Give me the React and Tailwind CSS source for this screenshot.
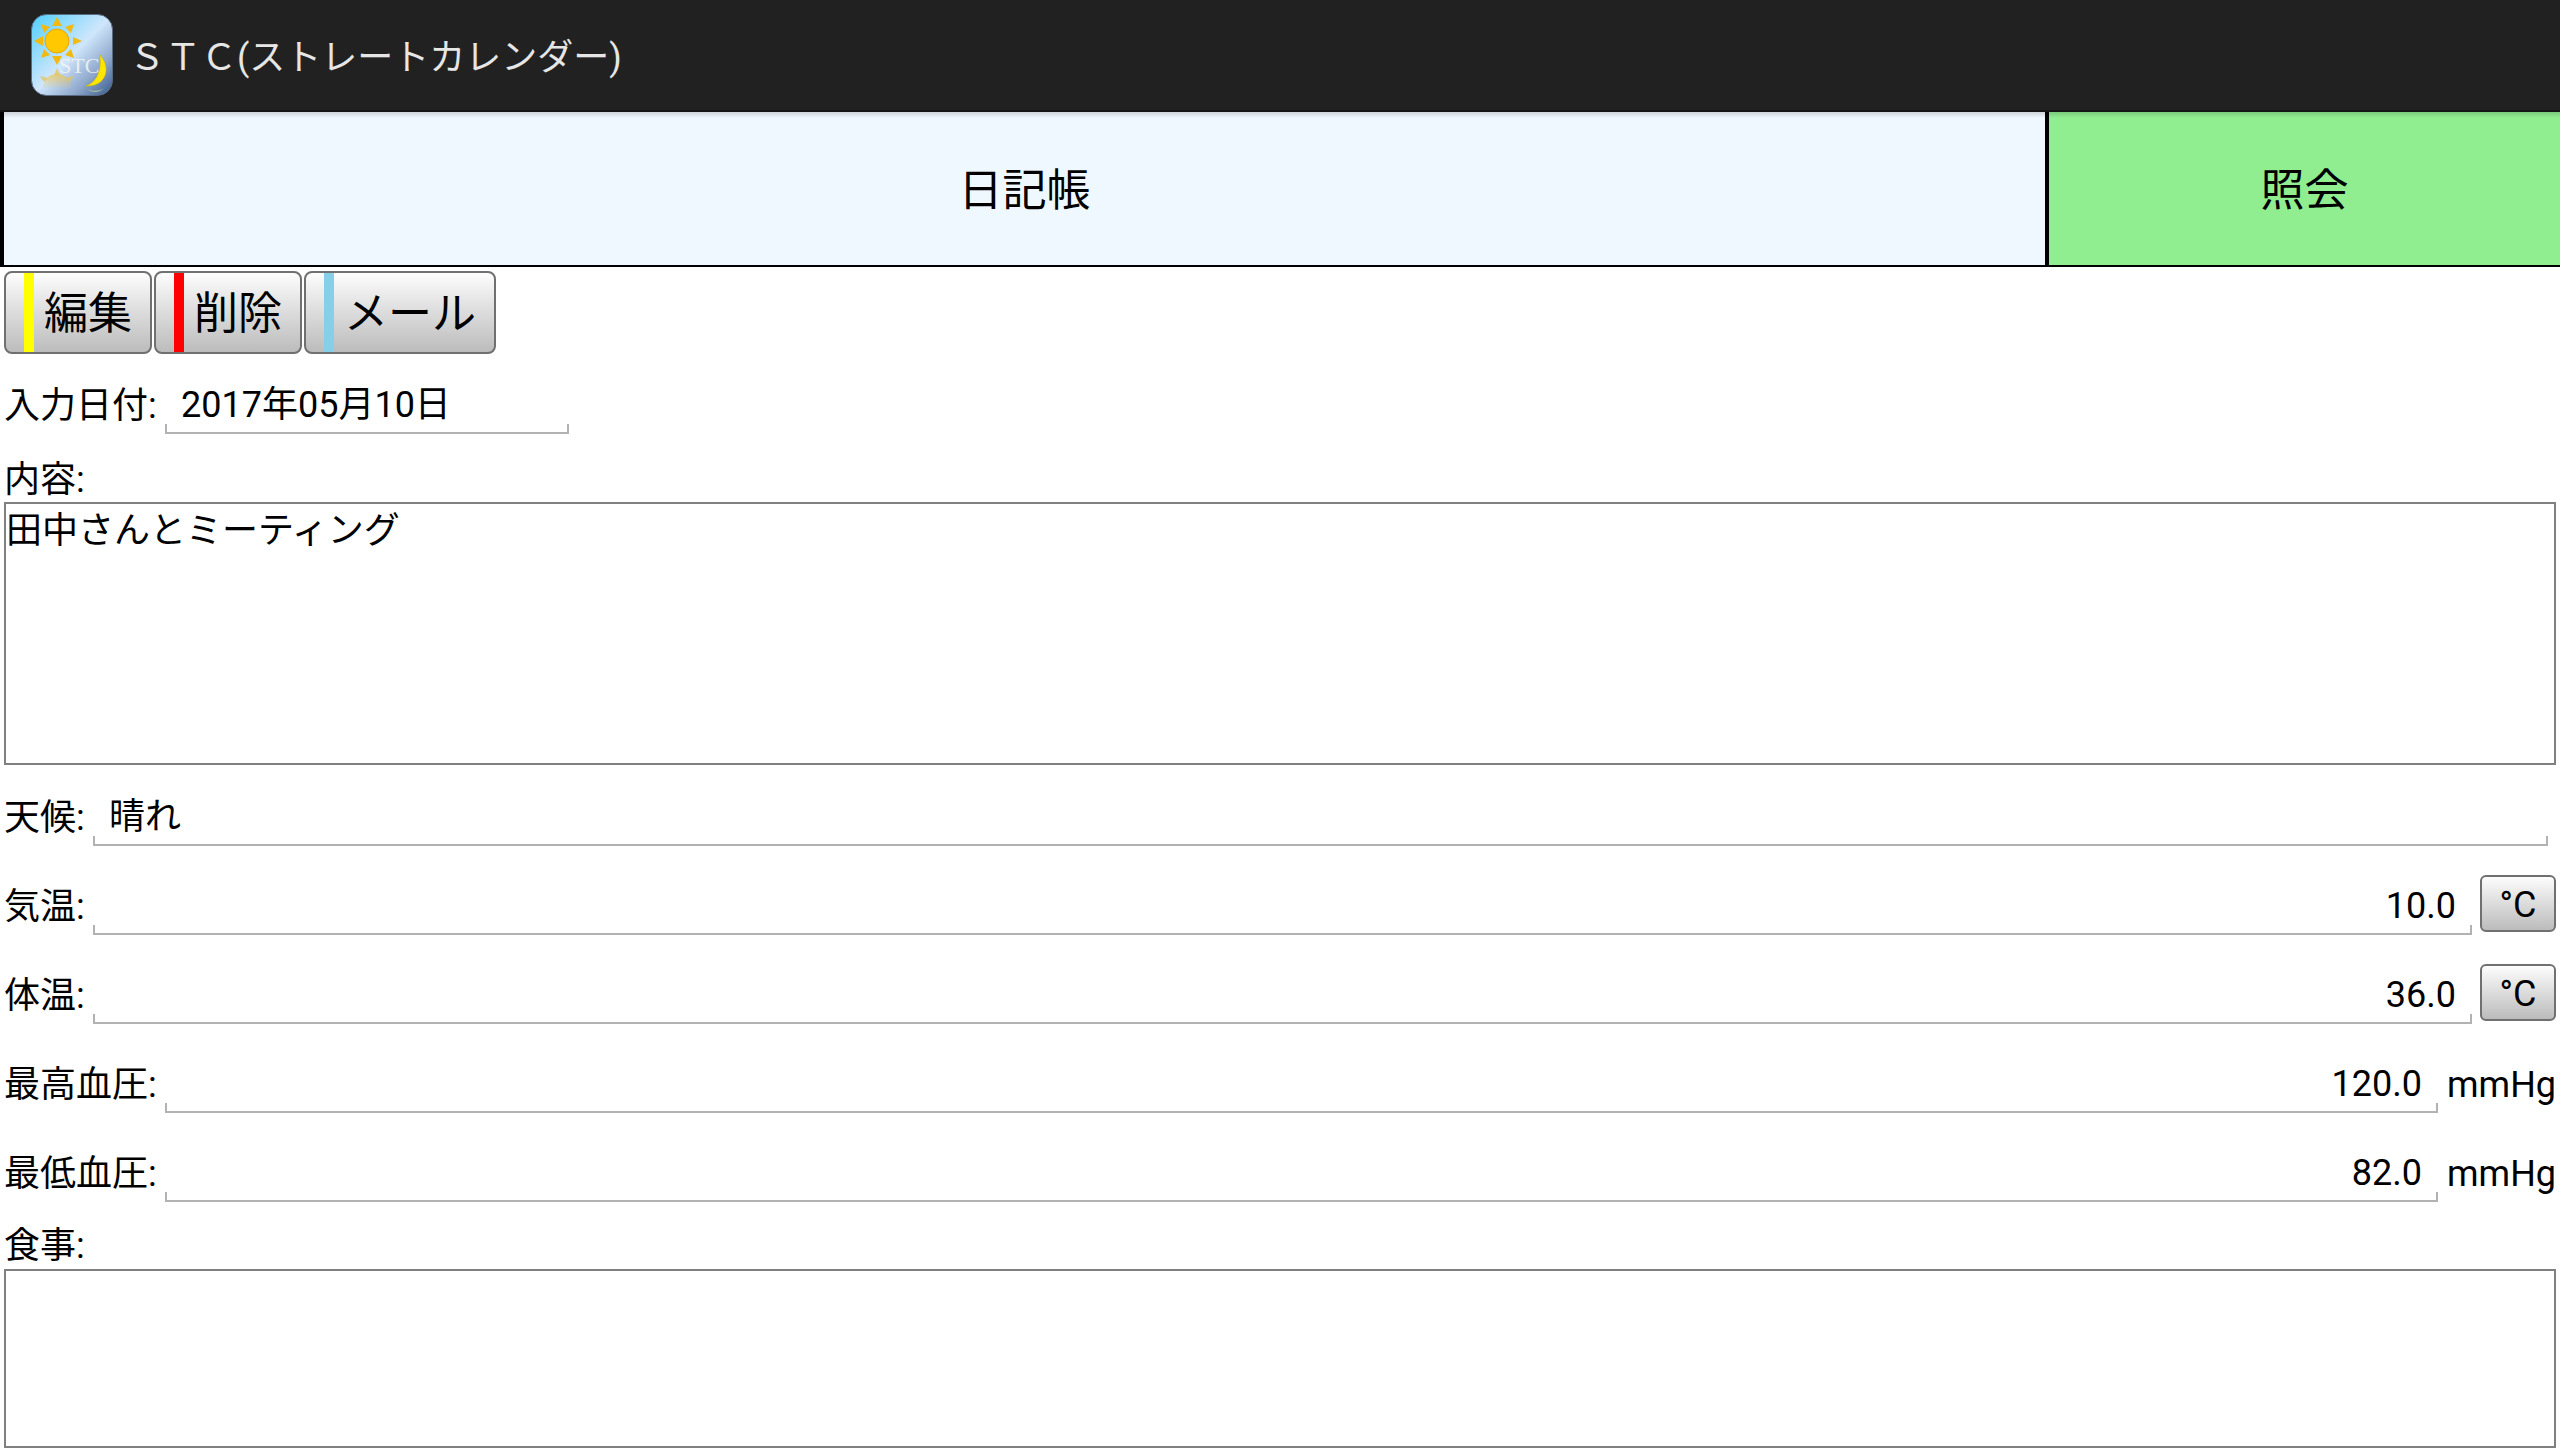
const FONT = "font-['Roboto','Noto_Sans_CJK_JP',sans-serif]";

function AppIcon() {
  return (
    <svg width="82" height="82" viewBox="0 0 82 82" className="shrink-0">
      <defs>
        <linearGradient id="sky" x1="0" y1="0" x2="1" y2="1">
          <stop offset="0" stopColor="#4fd0ff" />
          <stop offset="0.5" stopColor="#cfe6fb" />
          <stop offset="0.75" stopColor="#8fa8cc" />
          <stop offset="1" stopColor="#35588c" />
        </linearGradient>
        <linearGradient id="fade" x1="0" y1="0" x2="0" y2="1">
          <stop offset="0" stopColor="#f0c040" stopOpacity="0.7" />
          <stop offset="1" stopColor="#f0c040" stopOpacity="0.05" />
        </linearGradient>
      </defs>
      <rect x="0.5" y="0.5" width="81" height="81" rx="15" fill="url(#sky)" stroke="#5a6a80" />
      <circle cx="26" cy="27" r="12" fill="#ffc800" stroke="#e8a800" />
      <g fill="#f2b90f">
        <path d="M26 3l5 9H21z" />
        <path d="M26 51l-5-9h10z" />
        <path d="M3 27l9-5v10z" />
        <path d="M51 27l-9 4v-8z" />
        <path d="M10 10l9 3-6 6z" />
        <path d="M43 10l-3 9-6-6z" />
        <path d="M10 44l3-9 6 6z" />
        <path d="M43 44l-9-3 6-6z" />
      </g>
      <text x="28" y="59" fontSize="22" fontFamily="Liberation Serif" fill="#f4f4f4" fillOpacity="0.85">STC</text>
      <path d="M69 41c12 13 6 32-14 31 9-3 16-13 14-31z" fill="#ffe600" stroke="#c8b000" strokeWidth="0.5" />
      <path d="M12 74a14 14 0 0 1 28 0z" fill="url(#fade)" />
      <path d="M26 54l3 7h-6zM9 62l8 2-4 4zM43 62l-8 2 4 4z" fill="#e8c050" fillOpacity="0.7" />
      <path d="M56 75c6 3 13 2 17-1-3 4-11 6-17 1z" fill="#c8d890" fillOpacity="0.7" />
    </svg>
  );
}

function ActionBar() {
  return (
    <div className="flex h-[112px] items-center bg-[#212121] pl-[31px] border-b-2 border-[#151515]">
      <AppIcon />
      <span className="ml-[16px] mt-[6px] text-[36px] text-[#e6e6e6]">ＳＴＣ(ストレートカレンダー)</span>
    </div>
  );
}

function Tabs() {
  return (
    <div className="relative flex h-[155px] border-b-2 border-black text-[44px] text-black">
      <div className="absolute inset-x-0 top-0 h-[6px] bg-gradient-to-b from-black/15 to-transparent" />
      <div className="flex w-[2049px] items-center justify-center border-l-4 border-r-4 border-black bg-[#f0f8ff] pt-[5px]">日記帳</div>
      <div className="flex flex-1 items-center justify-center bg-[#90ee90] pt-[5px]">照会</div>
    </div>
  );
}

const ACTIONS = [
  { label: "編集", color: "bg-[#ffff00]", w: "w-[148px]", pl: "pl-[38px]" },
  { label: "削除", color: "bg-[#ff0000]", w: "w-[148px]", pl: "pl-[38px]" },
  { label: "メール", color: "bg-[#87ceeb]", w: "w-[192px]", pl: "pl-[38px]" },
];

function ActionButtons() {
  return (
    <div className="flex h-[87px] items-end gap-[2px] pl-[4px]">
      {ACTIONS.map((a) => (
        <div
          key={a.label}
          className={`relative flex h-[83px] items-center rounded-[8px] border-2 border-[#707070] bg-gradient-to-b from-[#fdfdfd] to-[#bcbcbc] pt-[3px] text-[44px] text-black ${a.w} ${a.pl}`}
        >
          <span className={`absolute left-[18px] top-0 bottom-0 w-[10px] ${a.color}`} />
          {a.label}
        </div>
      ))}
    </div>
  );
}

function Underline({ value, right, className = "" }) {
  return (
    <div className={`relative mb-[8px] flex h-[72px] items-center border-b-[2px] border-[#b2b2b2] px-[16px] pt-[16px] ${right ? "justify-end" : ""} ${className}`}>
      <span className="absolute bottom-0 left-0 h-[8px] w-[2px] bg-[#b2b2b2]" />
      <span className="absolute bottom-0 right-0 h-[8px] w-[2px] bg-[#b2b2b2]" />
      {value}
    </div>
  );
}

function Row({ label, labelW, children, className = "h-[89px]" }) {
  return (
    <div className={`flex items-end pl-[4px] text-[36px] text-black ${className}`}>
      <div className={`mb-[8px] flex h-[72px] shrink-0 items-center pt-[16px] ${labelW}`}>{label}</div>
      {children}
    </div>
  );
}

function UnitButton() {
  return (
    <div className="mb-[11px] ml-[8px] flex h-[57px] w-[76px] items-center justify-center rounded-[6px] border-2 border-[#707070] bg-gradient-to-b from-[#fdfdfd] to-[#bcbcbc] pt-[2px] text-[36px]">
      °C
    </div>
  );
}

function Box({ className = "", children }) {
  return <div className={`ml-[4px] w-[2552px] border-2 border-[#808080] text-[36px] leading-[54px] text-black ${className}`}>{children}</div>;
}

export default function App() {
  return (
    <div lang="ja" className={`h-[1456px] w-[2560px] overflow-hidden bg-white ${FONT}`}>
      <ActionBar />
      <Tabs />
      <ActionButtons />
      <Row label="入力日付:" labelW="w-[161px]" className="h-[88px]">
        <Underline value="2017年05月10日" className="w-[404px]" />
      </Row>
      <div className="flex h-[60px] items-center pl-[4px] pt-[15px] text-[36px] text-black">内容:</div>
      <Box className="h-[263px]">田中さんとミーティング</Box>
      <Row label="天候:" labelW="w-[89px]">
        <Underline value="晴れ" className="w-[2455px]" />
      </Row>
      <Row label="気温:" labelW="w-[89px]">
        <Underline value="10.0" right className="w-[2379px]" />
        <UnitButton />
      </Row>
      <Row label="体温:" labelW="w-[89px]">
        <Underline value="36.0" right className="w-[2379px]" />
        <UnitButton />
      </Row>
      <Row label="最高血圧:" labelW="w-[161px]">
        <Underline value="120.0" right className="w-[2273px]" />
        <span className="mb-[8px] ml-[9px] flex h-[72px] items-center pt-[16px]">mmHg</span>
      </Row>
      <Row label="最低血圧:" labelW="w-[161px]">
        <Underline value="82.0" right className="w-[2273px]" />
        <span className="mb-[8px] ml-[9px] flex h-[72px] items-center pt-[16px]">mmHg</span>
      </Row>
      <div className="flex h-[59px] items-center pl-[4px] pt-[12px] text-[36px] text-black">食事:</div>
      <Box className="h-[179px]" />
    </div>
  );
}
